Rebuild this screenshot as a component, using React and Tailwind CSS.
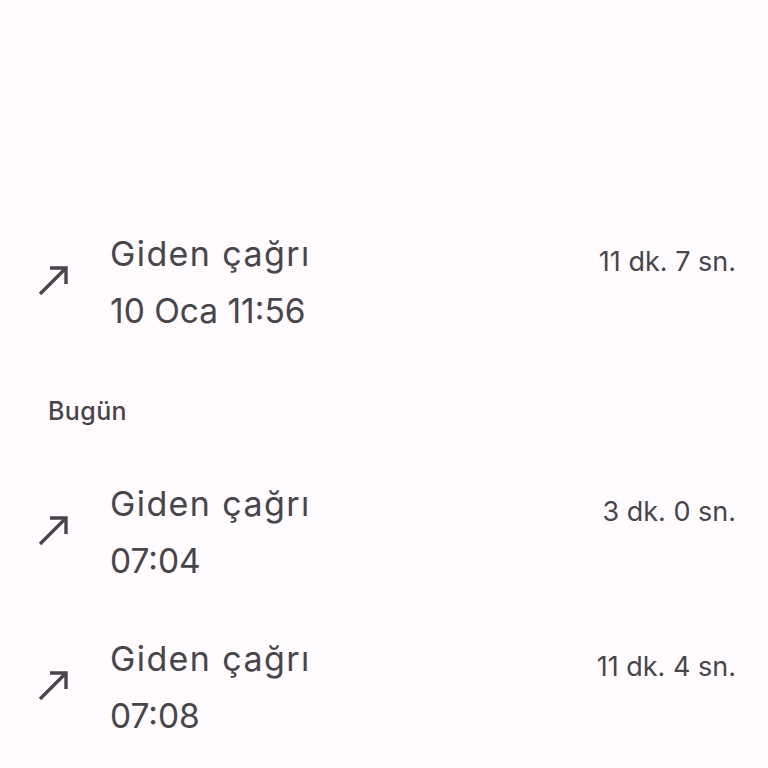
import React from "react";

function Arrow() {
  return (
    <svg width="36" height="36" viewBox="0 0 36 36" fill="none" stroke="#48454b" strokeWidth="3.4" strokeLinecap="butt" strokeLinejoin="miter">
      <path d="M5 31 L31 5" />
      <path d="M15 5 H31 V21" />
    </svg>
  );
}

function Row({ time, dur }) {
  return (
    <div className="flex items-center h-[155px]">
      <div className="w-[110px] pl-[35px] flex items-center">
        <Arrow />
      </div>
      <div className="flex-1 flex flex-col pt-[3px]">
        <div className="text-[34px] tracking-[1.4px] leading-[58px] text-[#48454b]">Giden çağrı</div>
        <div className="text-[33.5px] leading-[56px] text-[#48454b]">{time}</div>
      </div>
      <div className="self-start mt-[41px] pr-[32px] text-[27px] leading-[36px] text-[#48454b]">{dur}</div>
    </div>
  );
}

export default function App() {
  return (
    <div className="w-[768px] h-[768px] overflow-hidden bg-[#fffbfe]" style={{ fontFamily: "Inter, Roboto, sans-serif" }}>
      <div className="h-[203px]" />
      <Row time="10 Oca 11:56" dur="11 dk. 7 sn." />
      <div className="h-[95px] flex items-center pl-[48px] pt-[12px] text-[25px] tracking-[0.4px] font-medium text-[#48454b]">Bugün</div>
      <Row time="07:04" dur="3 dk. 0 sn." />
      <Row time="07:08" dur="11 dk. 4 sn." />
    </div>
  );
}
